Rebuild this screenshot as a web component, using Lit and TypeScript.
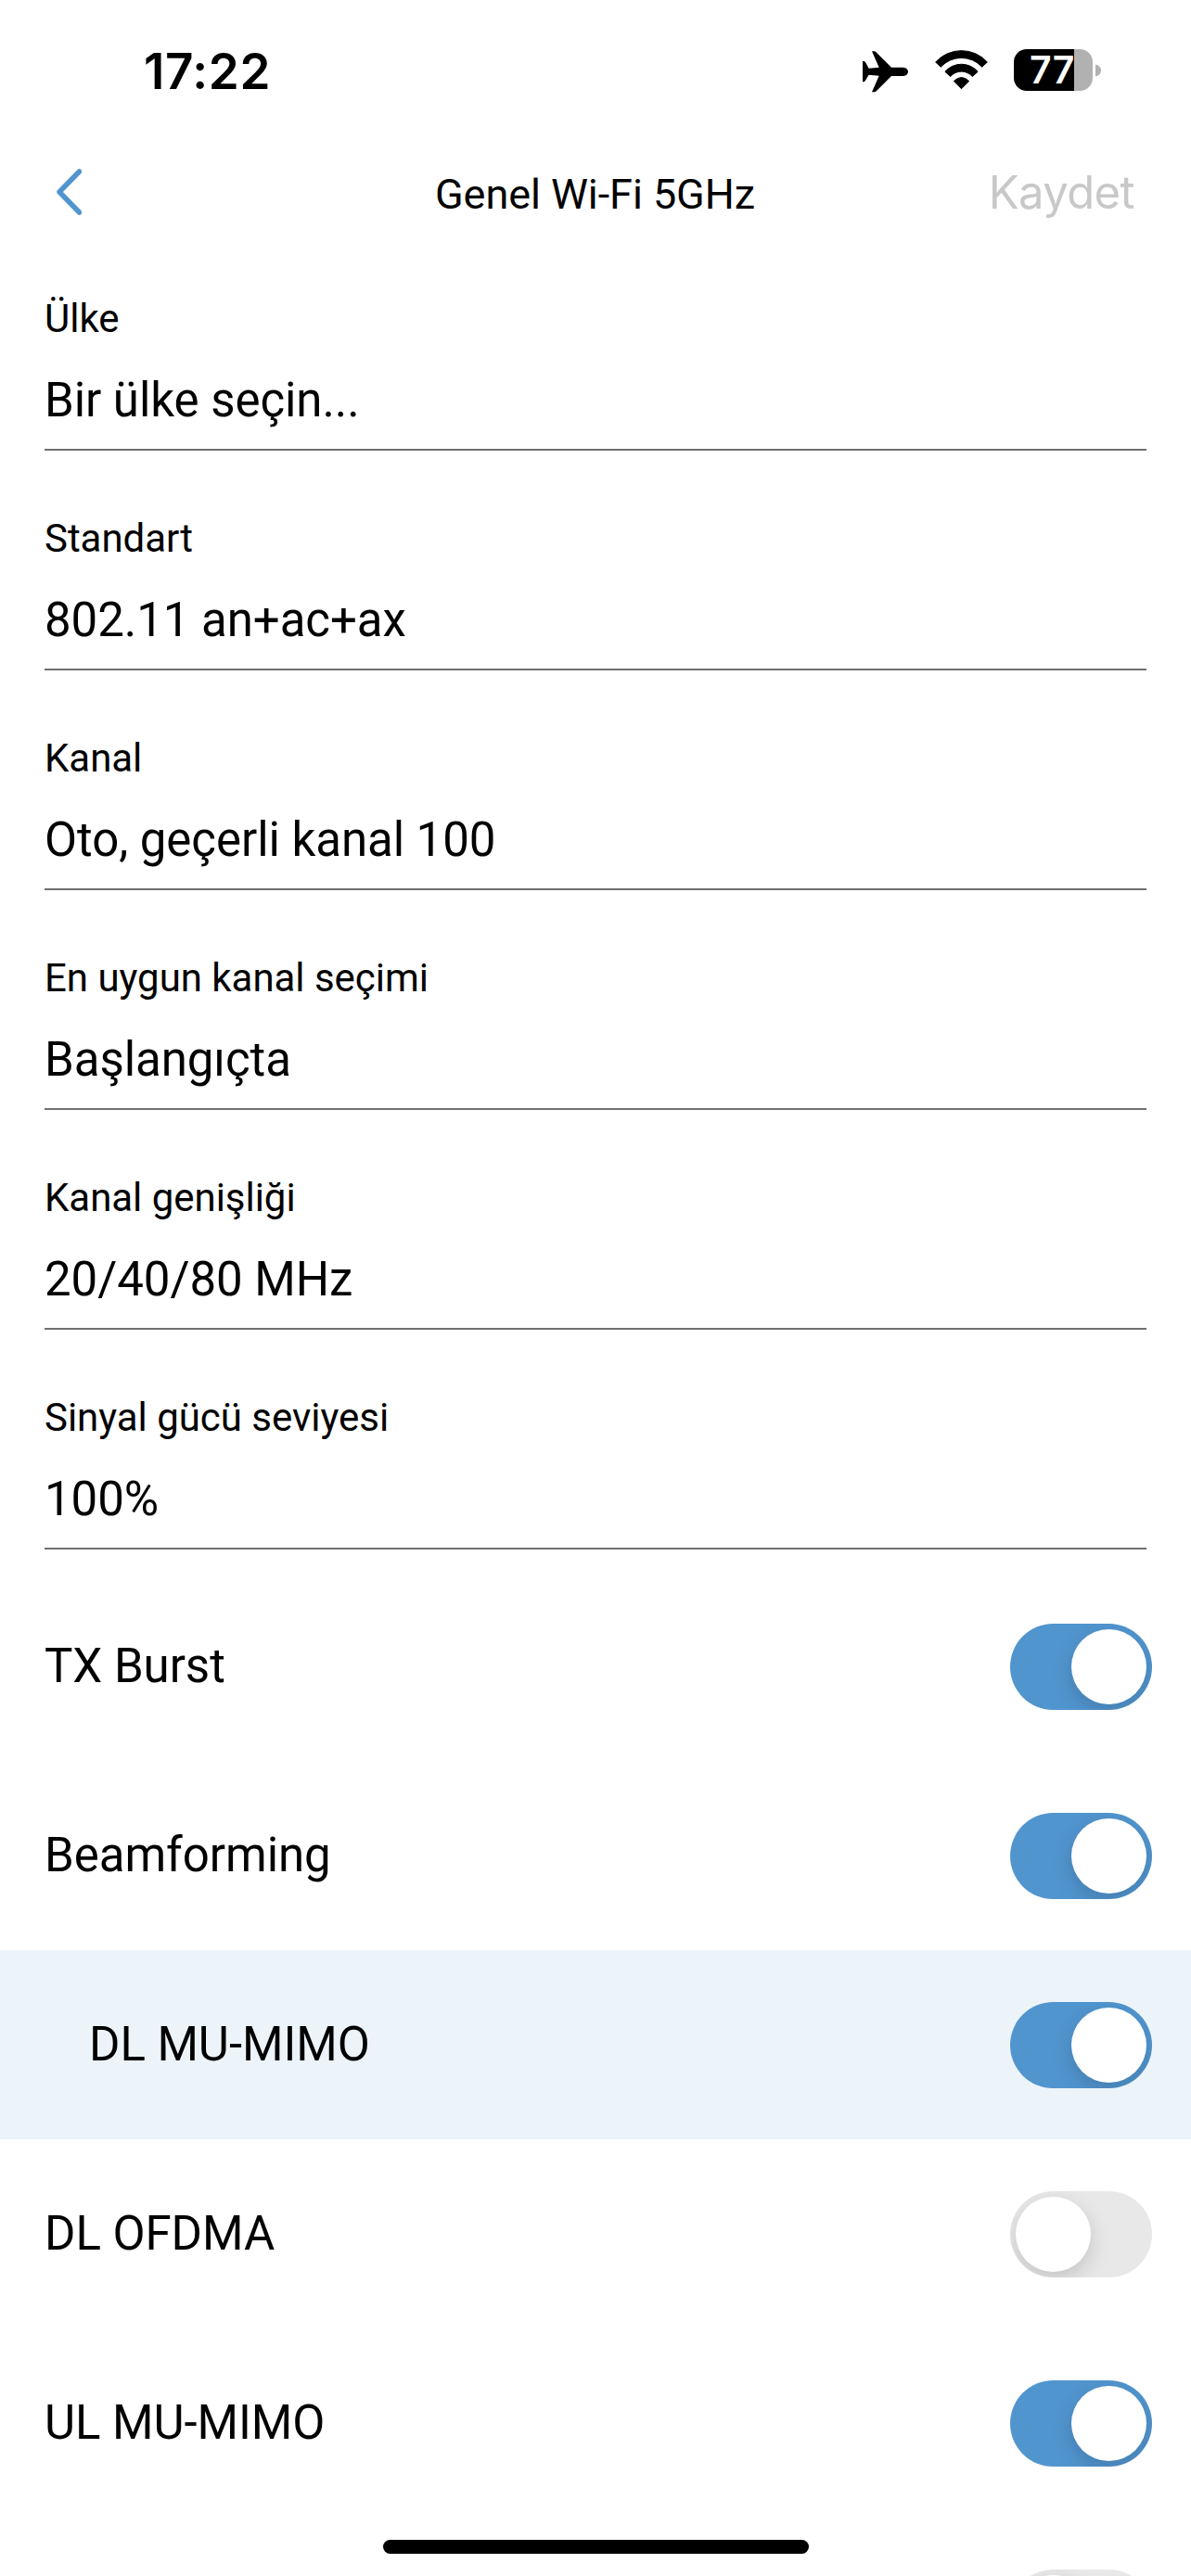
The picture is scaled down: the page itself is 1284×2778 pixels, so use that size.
import { LitElement, html, css } from "lit";
import { customElement, property } from "lit/decorators.js";
import { classMap } from "lit/directives/class-map.js";

interface Field {
  label: string;
  value: string;
}

interface Option {
  label: string;
  on: boolean;
  nested?: boolean;
}

const FIELDS: Field[] = [
  { label: "Ülke", value: "Bir ülke seçin..." },
  { label: "Standart", value: "802.11 an+ac+ax" },
  { label: "Kanal", value: "Oto, geçerli kanal 100" },
  { label: "En uygun kanal seçimi", value: "Başlangıçta" },
  { label: "Kanal genişliği", value: "20/40/80 MHz" },
  { label: "Sinyal gücü seviyesi", value: "100%" },
];

const OPTIONS: Option[] = [
  { label: "TX Burst", on: true },
  { label: "Beamforming", on: true },
  { label: "DL MU-MIMO", on: true, nested: true },
  { label: "DL OFDMA", on: false },
  { label: "UL MU-MIMO", on: true },
  { label: "", on: false },
];

@customElement("toggle-switch")
export class ToggleSwitch extends LitElement {
  @property({ type: Boolean }) on = false;

  static styles = css`
    :host {
      display: block;
      flex: none;
    }
    .track {
      box-sizing: border-box;
      display: flex;
      width: 153px;
      height: 93px;
      padding: 6px;
      border-radius: 47px;
      background: #e8e8e8;
      overflow: hidden;
    }
    .track.on {
      justify-content: flex-end;
      background: #5195cf;
    }
    .knob {
      width: 81px;
      height: 81px;
      border-radius: 50%;
      background: #fff;
      box-shadow: 0 8px 22px rgba(0, 0, 0, 0.16);
    }
  `;

  render() {
    return html`<div class=${classMap({ track: true, on: this.on })}>
      <div class="knob"></div>
    </div>`;
  }
}

@customElement("status-bar")
export class StatusBar extends LitElement {
  static styles = css`
    :host {
      display: flex;
      box-sizing: border-box;
      height: 170px;
      padding: 47px 97px 0 155px;
      justify-content: space-between;
      align-items: flex-start;
      font-family: Inter, sans-serif;
    }
    .time {
      font-size: 53px;
      line-height: 60px;
      font-weight: 600;
      letter-spacing: 0.6px;
    }
    .icons {
      display: flex;
      align-items: flex-start;
    }
    .plane {
      width: 49px;
      height: 45px;
      margin-top: 8px;
      margin-right: 29px;
    }
    .wifi {
      width: 57px;
      height: 43px;
      margin-top: 7px;
      margin-right: 28px;
    }
    .battery {
      display: flex;
      align-items: center;
      gap: 3px;
      margin-top: 6px;
    }
    .cell {
      box-sizing: border-box;
      width: 85px;
      height: 45px;
      border-radius: 14px;
      background: linear-gradient(90deg, #000 65px, #b1b1b1 65px);
      color: #fff;
      font-size: 41px;
      font-weight: 600;
      line-height: 45px;
      padding-left: 17px;
      letter-spacing: 0.3px;
    }
    .nub {
      width: 6px;
      height: 14px;
    }
  `;

  render() {
    return html`
      <div class="time">17:22</div>
      <div class="icons">
        <svg class="plane" viewBox="90 75 147 135">
          <path
            d="M183 128H221Q237 130 237 142Q237 154 221 156H183L135 204Q131 208 127 208H120L143 155L110 152L98 172Q96 175 93 175H90V108H94Q97 108 99 111L110 131L143 128L120 76H127Q131 76 135 80Z"
          />
        </svg>
        <svg class="wifi" viewBox="324 71 171 129">
          <g stroke="#000" stroke-width="3" stroke-linejoin="round">
            <path d="M326 110A112.500 112.500 0 0 1 493 110L476 125.500A90 90 0 0 0 343 125.500Z" />
            <path d="M356.500 141A70 70 0 0 1 462.500 141L445 156.500A47 47 0 0 0 374 156.500Z" />
            <path d="M385 171.500Q409.500 148 434 171.500L409.500 196Z" />
          </g>
        </svg>
        <div class="battery">
          <div class="cell">77</div>
          <svg class="nub" viewBox="0 0 6 14">
            <path d="M0 0.500Q6 2 6 7T0 13.500Z" fill="#b1b1b1" />
          </svg>
        </div>
      </div>
    `;
  }
}

@customElement("app-root")
export class AppRoot extends LitElement {
  static styles = css`
    :host {
      display: block;
      position: relative;
      width: 1284px;
      height: 2778px;
      overflow: hidden;
      background: #fff;
      color: #000;
      font-family: Roboto, sans-serif;
    }
    .header {
      display: grid;
      grid-template-columns: 1fr auto 1fr;
      align-items: center;
      box-sizing: border-box;
      height: 79px;
      padding: 0 61px 0 60px;
    }
    .back {
      display: block;
      width: 28px;
      height: 50px;
      margin-bottom: 5px;
    }
    .title {
      font-size: 45px;
      line-height: 54px;
      letter-spacing: -0.06px;
    }
    .save {
      justify-self: end;
      margin-bottom: 3px;
      color: #c8c8c8;
      font-family: Inter, sans-serif;
      font-size: 49px;
      line-height: 60px;
      letter-spacing: -0.6px;
    }
    .fields {
      padding: 0 48px;
    }
    .field {
      display: flex;
      flex-direction: column;
      gap: 33px;
      padding: 70px 0 22px;
      border-bottom: 2px solid #707070;
    }
    .label {
      font-size: 42px;
      line-height: 50px;
      letter-spacing: -0.03px;
    }
    .value {
      font-size: 51px;
      line-height: 60px;
      letter-spacing: -0.06px;
    }
    .options {
      padding-top: 24px;
    }
    .option {
      display: flex;
      align-items: center;
      justify-content: space-between;
      box-sizing: border-box;
      height: 204px;
      padding: 1px 42px 0 48px;
    }
    .name {
      margin-bottom: 2px;
      font-size: 51px;
      line-height: 60px;
      letter-spacing: -0.06px;
    }
    .nested {
      padding-left: 96px;
      background: #ecf4fa;
    }
    .home {
      position: absolute;
      left: 413px;
      bottom: 24px;
      width: 459px;
      height: 15px;
      border-radius: 8px;
      background: #000;
    }
  `;

  render() {
    return html`
      <status-bar></status-bar>
      <div class="header">
        <svg class="back" viewBox="0 0 28 50" fill="none" stroke="#5195cf" stroke-width="5.500">
          <path d="M25.500 3L4 25L25.500 47" stroke-linecap="round" stroke-linejoin="round" />
        </svg>
        <div class="title">Genel Wi-Fi 5GHz</div>
        <div class="save">Kaydet</div>
      </div>
      <div class="fields">
        ${FIELDS.map(
          (f) => html`<div class="field">
            <div class="label">${f.label}</div>
            <div class="value">${f.value}</div>
          </div>`
        )}
      </div>
      <div class="options">
        ${OPTIONS.map(
          (o) => html`<div class=${classMap({ option: true, nested: !!o.nested })}>
            <div class="name">${o.label}</div>
            <toggle-switch ?on=${o.on}></toggle-switch>
          </div>`
        )}
      </div>
      <div class="home"></div>
    `;
  }
}
